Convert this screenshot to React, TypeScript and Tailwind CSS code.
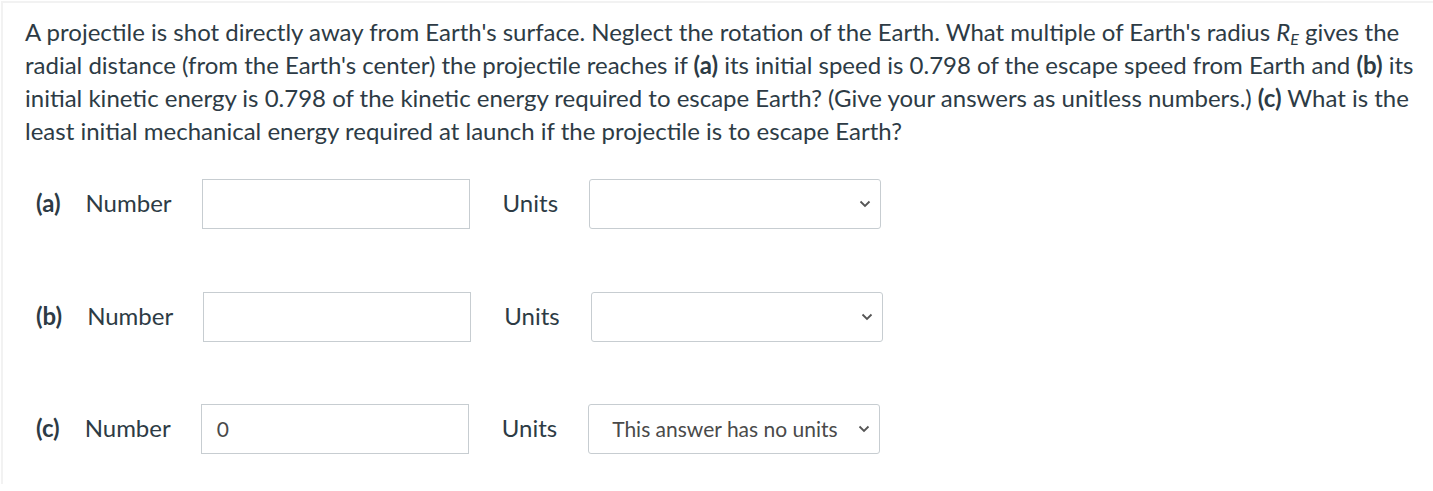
import React from 'react';

const Chevron = () => (
  <svg width="12" height="8" viewBox="0 0 12 8" className="shrink-0">
    <path d="M1.5 1.5 L6 6 L10.5 1.5" fill="none" stroke="#555" strokeWidth="1.8" />
  </svg>
);

type RowProps = { part: string; value?: string; units?: string; className?: string };

const AnswerRow: React.FC<RowProps> = ({ part, value, units, className }) => (
  <div className={`flex items-center ${className ?? ''}`}>
    <span className="ml-[11px] font-bold relative -top-[2px]">{part}</span>
    <span className="ml-[25px] relative -top-[2px]">Number</span>
    <div className="ml-[30px] w-[268px] h-[50px] border border-[#c7cdd1] bg-white flex items-center px-[15px] pb-[2px] text-[21px] text-[#4a4a4a]">
      {value}
    </div>
    <span className="ml-[33px] relative -top-[2px]">Units</span>
    <div className="ml-[31px] w-[292px] h-[50px] border border-[#c7cdd1] rounded-[3px] bg-white flex items-center justify-between pl-[23px] pr-[9px] text-[21px] text-[#4a4a4a]">
      <span className="relative -top-[1px]">{units}</span>
      <Chevron />
    </div>
  </div>
);

export default function App() {
  return (
    <div className="min-h-screen bg-white">
      <div
        className="ml-[1px] mt-[1px] border-l-2 border-t-2 border-[#f2f2f2] pl-[22px] pr-[8px] pt-[12px] pb-[30px] text-[#2d3b45] text-[24px] leading-[33px]"
        style={{ fontFamily: 'Lato, "Open Sans", sans-serif' }}
      >
        <p>
          A projectile is shot directly away from Earth's surface. Neglect the rotation of the Earth. What multiple of
          Earth's radius <i>R</i>
          <sub className="italic text-[16px]">E</sub> gives the radial distance (from the Earth's center) the projectile
          reaches if <b>(a)</b> its initial speed is 0.798 of the escape speed from Earth and <b>(b)</b> its initial
          kinetic energy is 0.798 of the kinetic energy required to escape Earth? (Give your answers as unitless
          numbers.) <b>(c)</b> What is the least initial mechanical energy required at launch if the projectile is to
          escape Earth?
        </p>
        <div className="mt-[32px] flex flex-col">
          <AnswerRow part="(a)" />
          <AnswerRow part="(b)" className="mt-[63px]" />
          <AnswerRow part="(c)" value="0" units="This answer has no units" className="mt-[62px]" />
        </div>
      </div>
    </div>
  );
}
